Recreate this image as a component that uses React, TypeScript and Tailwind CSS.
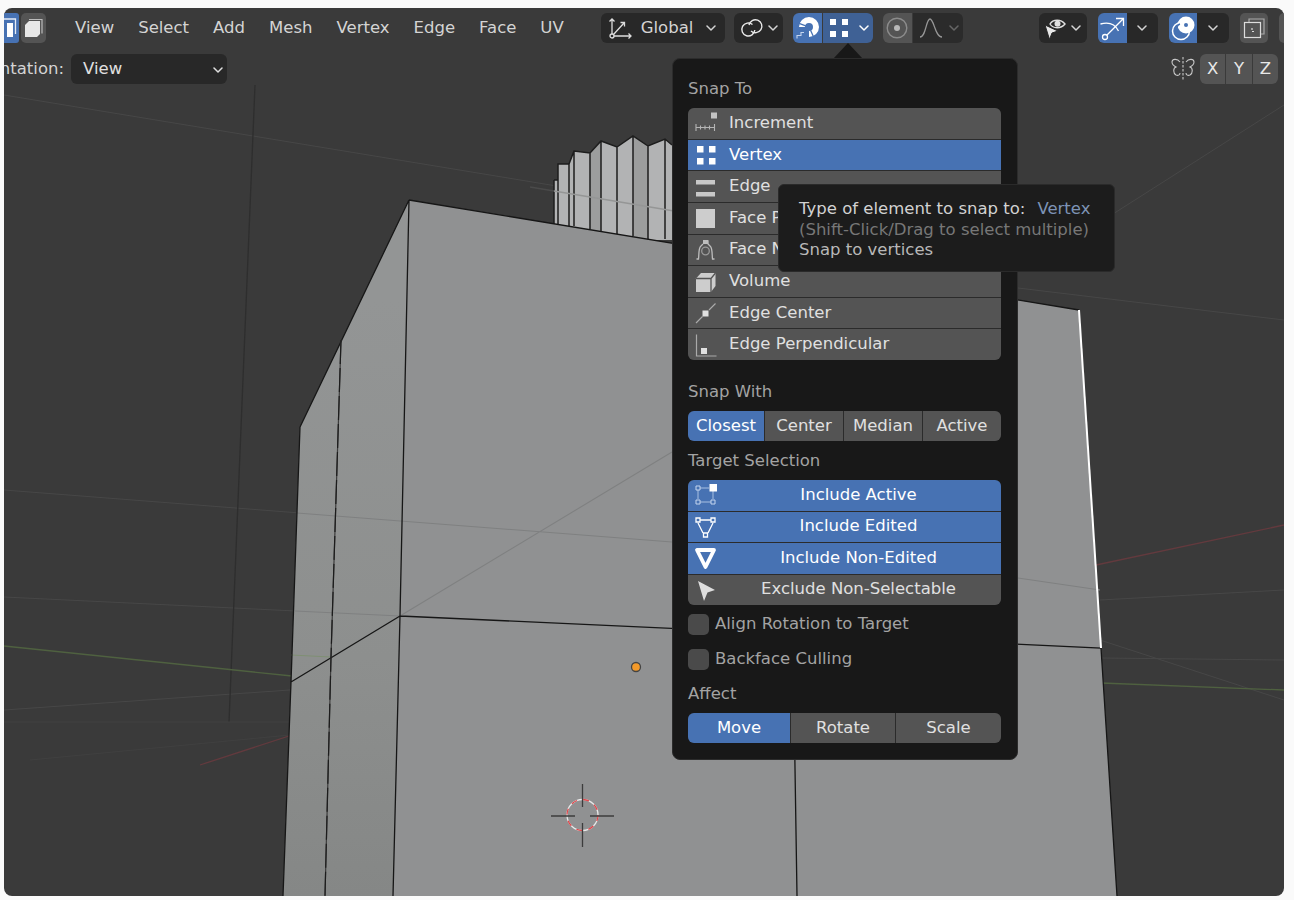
import type { ReactNode } from 'react';

const chevron = (
  <svg width="10" height="6" viewBox="0 0 10 6" fill="none" stroke="currentColor" strokeWidth="1.5" strokeLinecap="round" strokeLinejoin="round">
    <path d="M1 1l4 4 4-4" />
  </svg>
);

const Ic = ({ children, s = 24 }: { children: ReactNode; s?: number }) => (
  <svg width={s} height={s} viewBox="0 0 24 24" fill="none" className="shrink-0">
    {children}
  </svg>
);

const icons: Record<string, ReactNode> = {
  increment: (
    <Ic>
      <rect x="18" y="1.5" width="6" height="6" fill="#c4c4c4" />
      <path d="M3 13v7M21.500 13v7M3 16.500h18.500M7.500 14.500v4M12 14.500v4M16.500 14.500v4" stroke="#b4b4b4" strokeWidth="1.100" />
    </Ic>
  ),
  vertex: (
    <Ic>
      <path d="M4 3h6.500v6.500H4zM16 3h6.500v6.500H16zM4 15h6.500v6.500H4zM16 15h6.500v6.500H16z" fill="#fff" />
    </Ic>
  ),
  edge: (
    <Ic>
      <path d="M3 5h19v4.500H3zM3 17h19v4.500H3z" fill="#c8c8c8" />
    </Ic>
  ),
  face: (
    <Ic>
      <rect x="3" y="3" width="19" height="19" fill="#cdcdcd" />
    </Ic>
  ),
  nearest: (
    <Ic>
      <path d="M10 3h5v3l2.500 2.500c2 2 1.500 9 2 12.500h2M10 6L7.500 8.500c-2 2-1.500 9-2 12.500h-2" stroke="#bdbdbd" strokeWidth="1.300" />
      <rect x="10" y="2" width="5" height="4" fill="#bdbdbd" />
      <circle cx="12.500" cy="13" r="3.800" stroke="#9a9a9a" strokeWidth="1.300" />
    </Ic>
  ),
  volume: (
    <Ic>
      <path d="M3 9.500L8 4h14.500v13L18 23H3z" fill="#cdcdcd" />
      <path d="M3 9.500h15V23M18 9.500L22.500 4" stroke="#545454" strokeWidth="1.300" />
    </Ic>
  ),
  center: (
    <Ic>
      <path d="M3 22l6.500-6.500M16 9l6.500-6.500" stroke="#aaa" strokeWidth="1.200" />
      <rect x="9.500" y="9.500" width="6" height="6" fill="#e0e0e0" />
    </Ic>
  ),
  perp: (
    <Ic>
      <path d="M3.500 1.500V23h20" stroke="#aaa" strokeWidth="1.200" />
      <rect x="8" y="15" width="6" height="6" fill="#e0e0e0" />
    </Ic>
  ),
  active: (
    <Ic>
      <path d="M7 5h9M5 7v9M20 8v8M7 19h11" stroke="#a9c0e2" strokeWidth="1" />
      <path d="M3 3h4v4H3zM3 17h4v4H3zM18 17h4v4h-4z" stroke="#c5d5ee" strokeWidth="1" />
      <rect x="16.500" y="1" width="7.500" height="7.500" fill="#fff" />
    </Ic>
  ),
  edited: (
    <Ic>
      <path d="M7 5h11M5 8l5 10M20 8l-5 10" stroke="#fff" strokeWidth="1.300" />
      <path d="M3 3h4v4H3zM18 3h4v4h-4zM10.500 18h4v4h-4z" stroke="#fff" strokeWidth="1.300" />
    </Ic>
  ),
  nonedited: (
    <Ic>
      <path d="M4 4h17l-8.500 17z" stroke="#fff" strokeWidth="3.800" strokeLinejoin="round" />
    </Ic>
  ),
  cursor: (
    <Ic>
      <path d="M5 3l17 9-7.500 2.500L11 23z" fill="#ddd" />
    </Ic>
  ),
};

const snapRows: [string, string, boolean][] = [
  ['increment', 'Increment', false],
  ['vertex', 'Vertex', true],
  ['edge', 'Edge', false],
  ['face', 'Face Project', false],
  ['nearest', 'Face Nearest', false],
  ['volume', 'Volume', false],
  ['center', 'Edge Center', false],
  ['perp', 'Edge Perpendicular', false],
];

const targetRows: [string, string, boolean][] = [
  ['active', 'Include Active', true],
  ['edited', 'Include Edited', true],
  ['nonedited', 'Include Non-Edited', true],
  ['cursor', 'Exclude Non-Selectable', false],
];

function Label({ children, className = '' }: { children: ReactNode; className?: string }) {
  return <div className={`h-5 leading-5 text-[#a3a3a3] ${className}`}>{children}</div>;
}

function Segmented({ items, active, cols }: { items: string[]; active: string; cols: string }) {
  return (
    <div className={`grid h-[30px] w-[313px] gap-px overflow-hidden rounded-[6px] bg-[#2b2b2b] ${cols}`}>
      {items.map((t) => (
        <div key={t} className={`flex items-center justify-center ${t === active ? 'bg-[#4772b3] text-white' : 'bg-[#545454] text-[#e0e0e0]'}`}>
          {t}
        </div>
      ))}
    </div>
  );
}

function Check({ label, className }: { label: string; className: string }) {
  return (
    <div className={`flex h-[21px] items-center gap-[6px] text-[#a3a3a3] ${className}`}>
      <div className="h-[21px] w-[21px] rounded-[5px] bg-[#4a4a4a]" />
      {label}
    </div>
  );
}

function Scene() {
  return (
    <svg className="absolute inset-0" width="1280" height="888" viewBox="4 8 1280 888" fill="none">
      <defs>
        <linearGradient id="side" x1="0" y1="300" x2="0" y2="896" gradientUnits="userSpaceOnUse">
          <stop offset="0" stopColor="#939595" />
          <stop offset="0.6" stopColor="#8d8f8e" />
          <stop offset="1" stopColor="#858786" />
        </linearGradient>
      </defs>
      <rect x="4" y="8" width="1280" height="888" fill="#3a3a3a" />
      {/* floor grid */}
      <path
        d="M4 95L672 205M4 597L400 616M4 490L300 513M1284 320L1018 288M1284 105L1080 235M4 710L290 690M1100 658L1284 660M1100 600L1284 590M1100 640L1284 700"
        stroke="#474747"
        strokeWidth="1"
      />
      <path d="M255 85L229 722" stroke="#2e2e2e" strokeWidth="1.300" />
      <path d="M4 722H290M30 760L290 735" stroke="#404040" strokeWidth="1" />
      <path d="M4 646L292 676M1101 683L1284 690" stroke="#4f6140" strokeWidth="1.300" />
      <path d="M1284 525L1096 565M200 765L292 735" stroke="#633a3e" strokeWidth="1.300" />
      {/* back object */}
      <path d="M554 180h4v-16h11l5-13 16 2 11-12 16 6 16-11 15 10 17-7 7 6v95H554z" fill="#b2b3b4" />
      <path d="M590 153l11-12v96l-11-2zM633 136l15 10v96l-15-3z" fill="#9c9d9d" />
      <path
        d="M554 180h4v-16h11l5-13 16 2 11-12 16 6 16-11 15 10 17-7 7 6M554 180v44M558 164v60M569 164v62M574 151v75M590 153v76M601 141v90M617 147v87M633 136v100M648 146v94M665 139v100"
        stroke="#1d1d1d"
        strokeWidth="1.500"
      />
      <path d="M530 187L554 191" stroke="#4a4a4a" strokeWidth="1.300" />
      <path d="M554 191L680 212" stroke="#959696" strokeWidth="1.300" />
      {/* box faces */}
      <path d="M409 200L1079 310L1101 648L1117 896H283L291 682L300 427z" fill="#909192" />
      <path d="M300 427L409 200L400 616L393 896H283L291 682z" fill="url(#side)" />
      <path d="M297 513L672 542M400 616L672 452M295 611L400 616M1018 578L1100 590" stroke="#7f8081" strokeWidth="1.100" />
      <path d="M291 655L331 657" stroke="#7f8f73" strokeWidth="1" />
      {/* box edges */}
      <path
        d="M409 200L1079 310M409 200L300 427M300 427L291 682L283 896M409 200L400 616L393 896M400 616L1101 648L1117 896M400 616L291 682M793 640L797 896"
        stroke="#161616"
        strokeWidth="1.300"
      />
      <path d="M341 340L331 657L325 896" stroke="#3c3c3c" strokeWidth="1.200" />
      <path d="M341 340L331 657L325 896" stroke="#1c1c1c" strokeWidth="1.200" strokeDasharray="24 4" />
      <path d="M1079 310L1101 648" stroke="#fff" strokeWidth="2" />
      {/* origin and 3d cursor */}
      <circle cx="636" cy="667" r="4.500" fill="#f49a2a" stroke="#444" strokeWidth="1.300" />
      <circle cx="582.500" cy="815" r="15.500" stroke="#e8e8e8" strokeWidth="1.300" />
      <circle cx="582.500" cy="815" r="15.500" stroke="#e0474c" strokeWidth="1.300" strokeDasharray="6 6.200" />
      <path d="M582.500 784v23M582.500 823v24M551 816h24M590 816h24" stroke="#3c3c3c" strokeWidth="1.300" />
    </svg>
  );
}

export default function App() {
  return (
    <div className="h-[900px] w-[1294px] overflow-hidden bg-[#fafafa] pb-1 pl-1 pr-[10px] pt-2 font-['DejaVu_Sans',sans-serif] text-[16.5px] text-[#e0e0e0]">
      <div className="relative h-[888px] w-[1280px] overflow-hidden rounded-lg">
        <Scene />

        {/* top header */}
        <div className="relative flex h-[30px] translate-y-[5px] items-center text-[#d4d4d4]">
          <div className="flex h-[30px] w-[15px] items-center justify-end overflow-hidden rounded-r-[3px] bg-[#4772b3]">
            <svg width="15" height="30" viewBox="0 0 15 30" fill="none" className="shrink-0">
              <path d="M0 6h11.500v15" stroke="#e6edf7" strokeWidth="1.300" />
              <rect x="3" y="10" width="6" height="14" fill="#fff" />
            </svg>
          </div>
          <div className="ml-[2px] flex h-[30px] w-[25px] items-center justify-center rounded-[5px] bg-[#545454]">
            <svg width="22" height="22" viewBox="0 0 22 22" fill="none">
              <path d="M6 2.500h13v14" stroke="#bbb" strokeWidth="1.200" />
              <path d="M2 8l4-4h11v13l-3 3H2z" fill="#e8e8e8" />
            </svg>
          </div>
          <nav className="ml-[29px] flex gap-[24px]">
            {['View', 'Select', 'Add', 'Mesh', 'Vertex', 'Edge', 'Face', 'UV'].map((m) => (
              <span key={m}>{m}</span>
            ))}
          </nav>

          <div className="ml-[37px] flex h-[30px] w-[124px] items-center rounded-[6px] bg-[#282828] pl-[7px] pr-[9px]">
            <svg width="24" height="24" viewBox="0 0 24 24" fill="none" stroke="#ddd" strokeWidth="1.300">
              <circle cx="4" cy="20" r="2" />
              <path d="M4 18V3M1.500 5.500L4 3l2.500 2.500M6 20h17M20.500 17.500L23 20l-2.500 2.500M5.500 18.500L16 7M12.500 6.500h4v4" />
            </svg>
            <span className="ml-[9px]">Global</span>
            <span className="ml-auto">{chevron}</span>
          </div>

          <div className="ml-[9px] flex h-[30px] w-[49px] items-center rounded-[6px] bg-[#282828] pl-[6px] pr-[5px]">
            <svg width="24" height="24" viewBox="0 0 24 24" fill="none" stroke="#e8e8e8" strokeWidth="1.400">
              <path d="M12.500 8.500A6.500 6.500 0 1 0 14.800 14" />
              <path d="M11 15a6.500 6.500 0 1 0-2-6" />
            </svg>
            <span className="ml-auto">{chevron}</span>
          </div>

          <div className="ml-[10px] flex h-[30px] w-[80px] overflow-hidden rounded-[6px]">
            <div className="w-[29px] bg-[#4772b3]">
              {/* magnet */}
              <svg width="29" height="30" viewBox="0 0 29 30" fill="none">
                <path d="M9 14A7 7 0 1 1 16 21" stroke="#fff" strokeWidth="6" />
                <path d="M12.700 12.800L6.100 10.400M17.500 17.200L20.400 23.500" stroke="#4772b3" strokeWidth="1.300" />
                <path d="M4 25.500v-3h4v-3h3" stroke="#c5d5ee" strokeWidth="1.100" />
              </svg>
            </div>
            <div className="ml-px flex flex-1 items-center bg-[#3f6195] pl-[5px] pr-[4px] text-white">
              <svg width="22" height="22" viewBox="0 0 22 22" fill="#fff">
                <path d="M2 2h6v6H2zM14 2h6v6h-6zM2 14h6v6H2zM14 14h6v6h-6z" />
              </svg>
              <span className="ml-auto">{chevron}</span>
            </div>
          </div>

          <div className="ml-[10px] flex h-[30px] w-[80px] overflow-hidden rounded-[6px]">
            <div className="flex w-[29px] items-center justify-center bg-[#545454]">
              <svg width="22" height="22" viewBox="0 0 22 22" fill="none">
                <circle cx="11" cy="11" r="9.800" stroke="#8b8b8b" strokeWidth="1.400" />
                <circle cx="11" cy="11" r="3" fill="#b9b9b9" />
              </svg>
            </div>
            <div className="ml-px flex flex-1 items-center bg-[#2b2b2b] pl-[6px] pr-[4px] text-[#666]">
              <svg width="24" height="22" viewBox="0 0 24 22" fill="none" stroke="#979797" strokeWidth="1.300">
                <path d="M1 20c6 0 6-18 10-18s5 18 12 18" />
              </svg>
              <span className="ml-auto">{chevron}</span>
            </div>
          </div>

          <div className="ml-[76px] flex h-[30px] w-[48px] items-center rounded-[6px] bg-[#282828] pl-[3px] pr-[6px]">
            <svg width="26" height="26" viewBox="0 0 26 26" fill="none">
              <path d="M8 9c3-5 11-5 15 0-4 5-12 5-15 0z" stroke="#e0e0e0" strokeWidth="1.400" />
              <circle cx="15.500" cy="8.800" r="3" fill="#e0e0e0" />
              <path d="M3 10l13 6-6 2-2.500 6.500z" fill="#e8e8e8" stroke="#282828" strokeWidth="1" />
            </svg>
            <span className="ml-auto">{chevron}</span>
          </div>

          <div className="ml-[11px] flex h-[30px] w-[60px] overflow-hidden rounded-[6px]">
            <div className="flex w-[29px] items-center justify-center bg-[#4772b3]">
              <svg width="26" height="26" viewBox="0 0 26 26" fill="none" stroke="#fff" strokeWidth="1.300">
                <circle cx="6" cy="22" r="2.500" />
                <path d="M8 20L24 4M17 3.500h7.500V11M1.500 9C9 7 16 9 19.500 16" />
              </svg>
            </div>
            <div className="flex flex-1 items-center justify-center bg-[#282828]">{chevron}</div>
          </div>

          <div className="ml-[11px] flex h-[30px] w-[60px] overflow-hidden rounded-[6px]">
            <div className="flex w-[28px] items-center justify-center bg-[#4772b3]">
              <svg width="26" height="26" viewBox="0 0 26 26" fill="none">
                <circle cx="11" cy="16" r="8.500" stroke="#fff" strokeWidth="1.500" />
                <circle cx="16" cy="10" r="8.500" fill="#fff" />
                <circle cx="16" cy="10" r="2" fill="#4772b3" />
                <path d="M7 13a4 4 0 0 1 3-4" stroke="#4772b3" strokeWidth="1.500" />
              </svg>
            </div>
            <div className="flex flex-1 items-center justify-center bg-[#282828]">{chevron}</div>
          </div>

          <div className="ml-[11px] flex h-[30px] w-[28px] items-center justify-center rounded-[5px] bg-[#545454]">
            <svg width="24" height="24" viewBox="0 0 24 24" fill="none" stroke="#ddd" strokeWidth="1.200">
              <path d="M7 6V3h15v15h-3" stroke="#aaa" />
              <rect x="2.500" y="6.500" width="16" height="15" />
              <path d="M10 12v3.500h3" strokeDasharray="2 1.500" />
            </svg>
          </div>
          <div className="ml-[11px] h-[30px] flex-1 rounded-l-[5px] bg-[#545454]" />
        </div>

        {/* tool settings row */}
        <div className="relative mt-[16px] flex h-[30px] items-center text-[#d4d4d4]">
          <div className="flex w-[60px] justify-end overflow-hidden whitespace-nowrap pt-px">Orientation:</div>
          <div className="ml-[7px] flex h-[30px] w-[156px] items-center rounded-[6px] bg-[#282828] pl-[12px] pr-[4px] pt-px text-[#e0e0e0]">
            View
            <span className="ml-auto">{chevron}</span>
          </div>
          <svg width="26" height="26" viewBox="0 0 26 26" fill="none" stroke="#c8c8c8" strokeWidth="1.100" className="ml-[943px]">
            <path d="M13 1v24" strokeDasharray="2.500 1.500" />
            <path d="M10 6C7 2 2 3 2 6c0 2 2 4 4 5-3 1-3 6 0 8 2 1 4 0 4-2M16 6c3-4 8-3 8 0 0 2-2 4-4 5 3 1 3 6 0 8-2 1-4 0-4-2" />
          </svg>
          <div className="ml-[4px] grid h-[30px] w-[78px] grid-cols-3 gap-px overflow-hidden rounded-[6px] text-[#e8e8e8]">
            {['X', 'Y', 'Z'].map((a) => (
              <div key={a} className="flex items-center justify-center bg-[#545454]">
                {a}
              </div>
            ))}
          </div>
        </div>

        {/* popover arrow */}
        <svg className="absolute left-[828px] top-[34px]" width="32" height="18" viewBox="0 0 32 18" fill="#181818">
          <path d="M1 17L16 1l15 16z" />
        </svg>

        {/* snapping popover */}
        <div className="absolute left-[668px] top-[50px] flex h-[702px] w-[346px] flex-col rounded-lg border border-[#2c2c2c] bg-[#181818] pl-[15px] pt-[20px]">
          <Label>Snap To</Label>
          <div className="mt-[9px] grid h-[252px] w-[313px] grid-rows-8 gap-px overflow-hidden rounded-[6px] bg-[#2b2b2b]">
            {snapRows.map(([ic, label, on]) => (
              <div key={label} className={`flex items-center gap-[14px] pl-[6px] ${on ? 'bg-[#4772b3] text-white' : 'bg-[#545454]'}`}>
                <span className="flex w-[22px] justify-center">{icons[ic]}</span>
                <span className="-ml-px">{label}</span>
              </div>
            ))}
          </div>

          <Label className="mt-[22px]">Snap With</Label>
          <Segmented items={['Closest', 'Center', 'Median', 'Active']} active="Closest" cols="mt-[9px] grid-cols-[76px_78px_78px_1fr]" />

          <Label className="mt-[10px]">Target Selection</Label>
          <div className="mt-[9px] grid h-[125px] w-[313px] grid-rows-4 gap-px overflow-hidden rounded-[6px] bg-[#2b2b2b]">
            {targetRows.map(([ic, label, on]) => (
              <div key={label} className={`relative flex items-center justify-center ${on ? 'bg-[#4772b3] text-white' : 'bg-[#545454]'}`}>
                <span className="absolute left-[5px] top-1/2 -translate-y-1/2">{icons[ic]}</span>
                <span className="pl-[28px]">{label}</span>
              </div>
            ))}
          </div>

          <Check label="Align Rotation to Target" className="mt-[9px]" />
          <Check label="Backface Culling" className="mt-[14px]" />

          <Label className="mt-[14px]">Affect</Label>
          <Segmented items={['Move', 'Rotate', 'Scale']} active="Move" cols="mt-[9px] grid-cols-[102px_104px_1fr]" />
        </div>

        {/* tooltip */}
        <div className="absolute left-[774px] top-[176px] h-[88px] w-[337px] rounded-[6px] border border-[#2a2a2a] bg-[#1c1c1c] pl-5 pt-[14px] leading-[20.500px]">
          <div className="text-[#d2d2d2]">
            Type of element to snap to:<span className="ml-[12px] text-[#7d93b5]">Vertex</span>
          </div>
          <div className="text-[#777]">(Shift-Click/Drag to select multiple)</div>
          <div className="text-[#b8b8b8]">Snap to vertices</div>
        </div>
      </div>
    </div>
  );
}
